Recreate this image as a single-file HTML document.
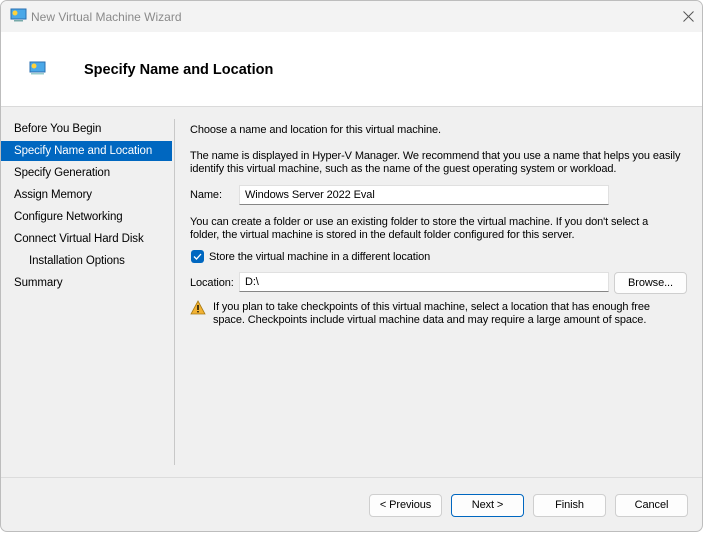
<!DOCTYPE html>
<html><head><style>
*{margin:0;padding:0;box-sizing:border-box}
body{width:704px;height:533px;background:#fff;font-family:"Liberation Sans",sans-serif;font-size:11px;letter-spacing:-0.1px;color:#000;position:relative;overflow:hidden}
.win{position:absolute;left:0;top:0;width:703px;height:532px;background:#f0f0f0;border:1px solid #bdbdbd;border-radius:7px;overflow:hidden}
.title{position:absolute;left:0;top:0;width:100%;height:31px;background:#f3f3f3;}
.title span{position:absolute;left:30px;top:9px;color:#8a8a8a;font-size:12px;letter-spacing:0}
.hdr{position:absolute;left:0;top:31px;width:100%;height:75px;background:#fff;border-bottom:1px solid #dadada}
.hdr h1{position:absolute;left:83px;top:30px;font-size:14.5px;font-weight:bold;letter-spacing:0}
.abs{position:absolute;white-space:nowrap}
.nav div{position:absolute;left:0;width:171px;height:20px;padding-left:13px;line-height:20px;font-size:11.5px}
.sel{background:#0067c0;color:#fff}
.vline{position:absolute;left:173px;top:118px;width:1px;height:346px;background:#c8c8c8}
.inp{position:absolute;background:#fff;border:1px solid #e0e0e0;border-bottom:1px solid #868686;height:20px;padding-left:5px;line-height:18px}
.btn{position:absolute;top:493px;width:73px;height:23px;background:#fdfdfd;border:1px solid #cfcfcf;border-radius:4px;text-align:center;line-height:21px}
.foot{position:absolute;left:0;top:476px;width:100%;height:1px;background:#dcdcdc}
</style></head><body>
<div class="win">
<div class="title">
<svg style="position:absolute;left:9px;top:7px" width="17" height="15"><rect x="1" y="1" width="15" height="10" fill="#4aa8e8" stroke="#2a6fb0"/><circle cx="5" cy="5" r="2.5" fill="#ffd23a"/><rect x="4" y="12" width="9" height="1.5" fill="#7aa"/></svg>
<span>New Virtual Machine Wizard</span>
<svg style="position:absolute;left:682px;top:10px" width="11" height="11"><path d="M0.5 0.5L10.5 10.5M10.5 0.5L0.5 10.5" stroke="#555" stroke-width="1"/></svg>
</div>
<div class="hdr">
<svg style="position:absolute;left:28px;top:29px" width="17" height="15"><rect x="1" y="1" width="15" height="10" fill="#4aa8e8" stroke="#2a6fb0"/><circle cx="5" cy="5" r="2.5" fill="#ffd23a"/><rect x="2" y="12" width="13" height="1.5" fill="#9cc"/></svg>
<h1>Specify Name and Location</h1>
</div>
<div class="nav">
<div style="top:118px">Before You Begin</div>
<div style="top:140px" class="sel">Specify Name and Location</div>
<div style="top:162px">Specify Generation</div>
<div style="top:184px">Assign Memory</div>
<div style="top:206px">Configure Networking</div>
<div style="top:228px">Connect Virtual Hard Disk</div>
<div style="top:250px;padding-left:28px">Installation Options</div>
<div style="top:272px">Summary</div>
</div>
<div class="vline"></div>
<div class="abs" style="left:189px;top:123px">Choose a name and location for this virtual machine.</div>
<div class="abs" style="left:189px;top:149px;line-height:13px">The name is displayed in Hyper-V Manager. We recommend that you use a name that helps you easily<br>identify this virtual machine, such as the name of the guest operating system or workload.</div>
<div class="abs" style="left:189px;top:188px">Name:</div>
<div class="inp" style="left:238px;top:184px;width:370px">Windows Server 2022 Eval</div>
<div class="abs" style="left:189px;top:215px;line-height:13px">You can create a folder or use an existing folder to store the virtual machine. If you don't select a<br>folder, the virtual machine is stored in the default folder configured for this server.</div>
<div class="abs" style="left:190px;top:249px;width:13px;height:13px;background:#0067c0;border-radius:3px"><svg width="13" height="13" style="position:absolute;left:0;top:0"><path d="M3 6.5L5.5 9L10 4" stroke="#fff" stroke-width="1.3" fill="none"/></svg></div>
<div class="abs" style="left:208px;top:250px">Store the virtual machine in a different location</div>
<div class="abs" style="left:189px;top:276px">Location:</div>
<div class="inp" style="left:238px;top:271px;width:370px">D:\</div>
<div class="btn" style="left:613px;top:271px;height:22px;line-height:20px">Browse...</div>
<svg class="abs" style="left:189px;top:299px" width="16" height="15"><path d="M8 1L15 14H1Z" fill="#f2b233" stroke="#a87a12" stroke-width="0.8"/><rect x="7.3" y="5" width="1.4" height="5" fill="#000"/><rect x="7.3" y="11" width="1.4" height="1.4" fill="#000"/></svg>
<div class="abs" style="left:212px;top:300px;line-height:13px">If you plan to take checkpoints of this virtual machine, select a location that has enough free<br>space. Checkpoints include virtual machine data and may require a large amount of space.</div>
<div class="foot"></div>
<div class="btn" style="left:368px">&lt; Previous</div>
<div class="btn" style="left:450px;border-color:#0067c0">Next &gt;</div>
<div class="btn" style="left:532px">Finish</div>
<div class="btn" style="left:614px">Cancel</div>
</div>
</body></html>
